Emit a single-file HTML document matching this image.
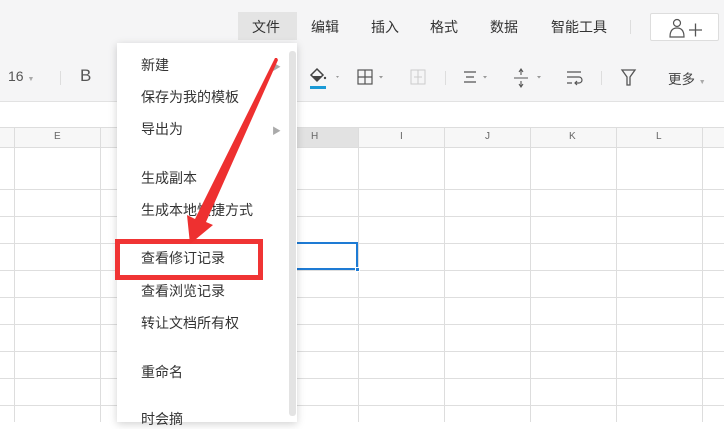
<!DOCTYPE html>
<html><head><meta charset="utf-8"><style>
*{margin:0;padding:0;box-sizing:border-box}
body{width:724px;height:422px;overflow:hidden;background:#fff;font-family:"Liberation Sans","Noto Sans CJK SC",sans-serif;position:relative;color:#333}
.a{position:absolute}
.top{left:0;top:0;width:724px;height:102px;background:#f5f5f6;border-bottom:1px solid #e2e2e2}
.m{position:absolute;top:17px;font-size:14px;color:#333}
.hdr{left:0;top:127px;width:724px;height:21px;background:#f7f7f7;border-top:1px solid #ddd;border-bottom:1px solid #ddd}
.vl{position:absolute;top:127px;width:1px;height:295px;background:#ddd}
.hl{position:absolute;left:0;width:724px;height:1px;background:#dedede}
.ch{position:absolute;top:131px;font-size:10px;color:#666}
.menu{left:117px;top:43px;width:180px;height:379px;background:#fff;box-shadow:0 2px 8px rgba(0,0,0,.18)}
.mi{position:absolute;left:24px;font-size:14px;color:#333;white-space:nowrap}
.tb{position:absolute;top:68px;font-size:14px;color:#555}
.car{font-size:7px;color:#aaa}
</style></head><body>
<div class="a top"></div>
<div class="a" style="left:238px;top:12px;width:59px;height:28px;background:#e4e4e4"></div>
<div class="m" style="left:252px">文件</div>
<div class="m" style="left:311px">编辑</div>
<div class="m" style="left:371px">插入</div>
<div class="m" style="left:430px">格式</div>
<div class="m" style="left:490px">数据</div>
<div class="m" style="left:551px">智能工具</div>
<div class="a" style="left:630px;top:20px;width:1px;height:14px;background:#ddd"></div>
<div class="a" style="left:650px;top:13px;width:69px;height:28px;background:#fff;border:1px solid #ddd;border-radius:2px"></div>
<svg class="a" style="left:668px;top:17px" width="40" height="22" viewBox="0 0 40 22"><circle cx="9" cy="6" r="3.5" fill="none" stroke="#555" stroke-width="1.2"/><path d="M2 20 Q2 11 9 11 Q16 11 16 20 Z" fill="none" stroke="#555" stroke-width="1.2"/><path d="M21 13h13M27.5 6.5v13" stroke="#555" stroke-width="1.3"/></svg>
<div class="tb" style="left:8px">16 <span class="car">▼</span></div>
<div class="a" style="left:60px;top:71px;width:1px;height:14px;background:#ddd"></div>
<div class="tb" style="left:80px;font-size:17px;top:66px">B</div>
<svg class="a" style="left:308px;top:66px" width="35" height="24"><path d="M3 9 L9 3 L15 9 L9 15 Z" fill="none" stroke="#444" stroke-width="1.5"/><path d="M4 10 L14 10 L9 15Z" fill="#444"/><circle cx="17" cy="12" r="1.2" fill="#444"/><rect x="2" y="20" width="16" height="3" fill="#1b9ad6"/><path d="M28 10l3 0-1.5 2z" fill="#999"/></svg>
<svg class="a" style="left:357px;top:68px" width="32" height="20"><rect x="1" y="2" width="14" height="14" fill="none" stroke="#555" stroke-width="1.2"/><path d="M8 2v14M1 9h14" stroke="#555" stroke-width="1.2"/><path d="M22 8l4 0-2 2.5z" fill="#999"/></svg>
<svg class="a" style="left:410px;top:69px" width="18" height="18"><rect x="1" y="1" width="14" height="14" fill="none" stroke="#ccc"/><path d="M8 1v14M4 8h8" stroke="#ccc"/></svg>
<div class="a" style="left:445px;top:71px;width:1px;height:14px;background:#ddd"></div>
<svg class="a" style="left:461px;top:68px" width="32" height="20"><path d="M3 4h12M5 9h8M3 14h12" stroke="#555" stroke-width="1.2"/><path d="M22 8l4 0-2 2.5z" fill="#999"/></svg>
<svg class="a" style="left:512px;top:66px" width="34" height="24"><path d="M2 12h14M9 3v6M9 15v6M7 6l2-3 2 3M7 18l2 3 2-3" stroke="#555" stroke-width="1.1" fill="none"/><path d="M25 10l4 0-2 2.5z" fill="#999"/></svg>
<svg class="a" style="left:565px;top:68px" width="20" height="20"><path d="M2 4h14M2 9h12a3 3 0 0 1 0 6h-4M12 13l-2 2 2 2M2 15h5" stroke="#555" stroke-width="1.2" fill="none"/></svg>
<div class="a" style="left:601px;top:71px;width:1px;height:14px;background:#ddd"></div>
<svg class="a" style="left:620px;top:67px" width="18" height="20"><path d="M2 3h13L10 10v8h-3v-8Z" fill="none" stroke="#555" stroke-width="1.3"/></svg>
<div class="tb" style="left:668px;top:68px;font-size:13.5px;color:#444">更多 <span class="car">▼</span></div>
<div class="a hdr"></div>
<div class="a" style="left:296px;top:128px;width:62px;height:19px;background:#e2e2e2"></div>
<div class="vl" style="left:14px"></div><div class="vl" style="left:100px"></div><div class="vl" style="left:186px"></div><div class="vl" style="left:272px"></div><div class="vl" style="left:358px"></div><div class="vl" style="left:444px"></div><div class="vl" style="left:530px"></div><div class="vl" style="left:616px"></div><div class="vl" style="left:702px"></div>
<div class="ch" style="left:54px">E</div><div class="ch" style="left:311px">H</div><div class="ch" style="left:400px">I</div><div class="ch" style="left:485px">J</div><div class="ch" style="left:569px">K</div><div class="ch" style="left:656px">L</div>
<div class="hl" style="top:189px"></div><div class="hl" style="top:216px"></div><div class="hl" style="top:243px"></div><div class="hl" style="top:270px"></div><div class="hl" style="top:297px"></div><div class="hl" style="top:324px"></div><div class="hl" style="top:351px"></div><div class="hl" style="top:378px"></div><div class="hl" style="top:405px"></div>
<div class="a" style="left:290px;top:242px;width:68px;height:28px;border:2px solid #1e7bd4;border-left:none"></div>
<div class="a" style="left:355px;top:267px;width:5px;height:5px;background:#1e7bd4;border:1px solid #fff"></div>
<div class="a menu">
<div class="a" style="left:172px;top:8px;width:7px;height:365px;background:#e3e3e3;border-radius:3px"></div>
<div class="mi" style="top:12px">新建</div><div class="a car" style="left:155px;top:17px;color:#aaa;font-size:9px">▶</div>
<div class="mi" style="top:44px">保存为我的模板</div>
<div class="mi" style="top:76px">导出为</div><div class="a car" style="left:155px;top:81px;color:#aaa;font-size:9px">▶</div>
<div class="mi" style="top:125px">生成副本</div>
<div class="mi" style="top:157px">生成本地快捷方式</div>
<div class="mi" style="top:205px">查看修订记录</div>
<div class="mi" style="top:238px">查看浏览记录</div>
<div class="mi" style="top:270px">转让文档所有权</div>
<div class="mi" style="top:319px">重命名</div>
<div class="mi" style="top:366px">时会摘</div>
</div>
<div class="a" style="left:115px;top:239px;width:148px;height:41px;border:5px solid #f03434"></div>
<svg class="a" style="left:0;top:0" width="724" height="422"><path d="M277 58 L278 60 L206 222 L213 225 L190 244 L187 215 L195 219 L275 58 Z" fill="#ee3030"/></svg>
</body></html>
